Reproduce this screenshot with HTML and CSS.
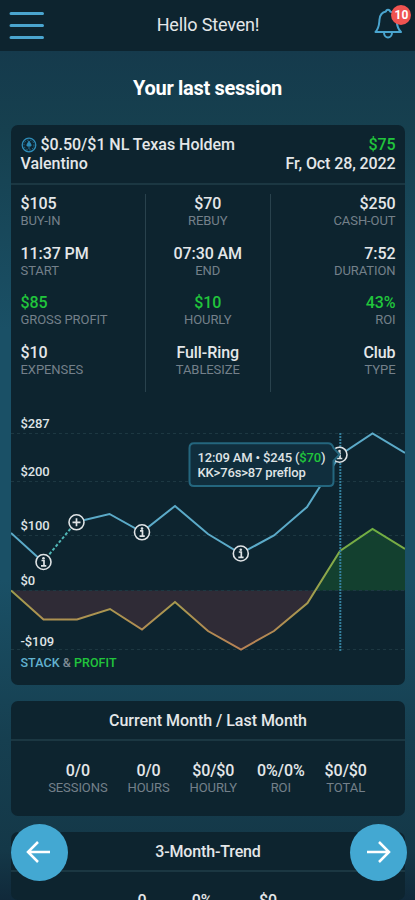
FILE: index.html
```html
<!DOCTYPE html>
<html lang="en">
<head>
<meta charset="utf-8">
<title>Session overview</title>
<link rel="stylesheet" href="styles.css">
</head>
<body>
<header class="topbar">
  <svg class="menu" viewBox="0 0 36 30"><path d="M3 2.500H34.500M3 14.500H34.500M3 26.500H34.500"/></svg>
  <div class="hello">Hello Steven!</div>
  <div class="bell">
    <svg viewBox="0 0 30 32"><path d="M1.500 25C5.500 20.500 5 17 5.500 12.500C6 7.500 9 5 12 4.500C12.300 2 15.700 2 16 4.500C19 5 22 7.500 22.500 12.500C23 17 22.500 20.500 27 25ZM10 25.500C10 32 18 32 18 25.500"/></svg>
    <span class="badge">10</span>
  </div>
</header>
<h1 class="title">Your last session</h1>
<main class="cards">
  <section class="card session">
    <div class="head">
      <div><svg class="coin" viewBox="0 0 16 16"><circle cx="8" cy="8" r="6.800"/><circle class="dash" cx="8" cy="8" r="5"/><path d="M8 4L6 7.500C5.300 9 6.800 9.800 8 8.800C9.200 9.800 10.700 9 10 7.500ZM8 8V12"/></svg>$0.50/$1 NL Texas Holdem<br>Valentino</div>
      <div class="right"><span class="green">$75</span><br>Fr, Oct 28, 2022</div>
    </div>
    <div class="facts">
      <div class="col">
        <div class="fact"><b>$105</b><span>BUY-IN</span></div>
        <div class="fact"><b>11:37 PM</b><span>START</span></div>
        <div class="fact"><b class="green">$85</b><span>GROSS PROFIT</span></div>
        <div class="fact"><b>$10</b><span>EXPENSES</span></div>
      </div>
      <div class="col mid">
        <div class="fact"><b>$70</b><span>REBUY</span></div>
        <div class="fact"><b>07:30 AM</b><span>END</span></div>
        <div class="fact"><b class="green">$10</b><span>HOURLY</span></div>
        <div class="fact"><b>Full-Ring</b><span>TABLESIZE</span></div>
      </div>
      <div class="col last">
        <div class="fact"><b>$250</b><span>CASH-OUT</span></div>
        <div class="fact"><b>7:52</b><span>DURATION</span></div>
        <div class="fact"><b class="green">43%</b><span>ROI</span></div>
        <div class="fact"><b>Club</b><span>TYPE</span></div>
      </div>
    </div>
    <svg class="chart" viewBox="11 400 394 285">
      <defs>
        <linearGradient id="profit" gradientUnits="userSpaceOnUse" x1="0" y1="529" x2="0" y2="650">
          <stop offset="0" stop-color="#6fae42"/><stop offset=".35" stop-color="#8aa84a"/><stop offset=".6" stop-color="#a79a4f"/><stop offset="1" stop-color="#b88155"/>
        </linearGradient>
        <g id="info"><circle r="7.500" class="ring"/><path class="glyph" d="M-2-1.500H.5V3.500M-2.500 3.800H2.800"/><circle class="dot" cx="0" cy="-3.700" r="1.300"/></g>
      </defs>
      <path class="loss" d="M11 590.500L43.500 619.500H77L110 609L142 629.500L175 602L208 631L241 649.500L274 631L307.500 603L315.500 590.500Z"/>
      <path class="gain" d="M315.500 590.500L340 551L372.500 529L405 549V590.500Z"/>
      <path class="grid" d="M11 433.500H405M11 481.500H405M11 535.500H405M11 590.500H405M11 649.500H405"/>
      <path class="profit" d="M11 590.500L43.500 619.500H77L110 609L142 629.500L175 602L208 631L241 649.500L274 631L307.500 603L340 551L372.500 529L405 549"/>
      <path class="cursor" d="M340.300 433V651"/>
      <path class="stack" d="M11 533L43 562M76 522L109.500 514L142 532L175 506L208 534L240.500 553.500L274 535.500L307 507L340 455L372.500 433.500L405 453"/>
      <path class="stack dotted" d="M43 562L76 522"/>
      <use href="#info" x="43.500" y="562"/>
      <g transform="translate(76.500 522.300)"><circle r="7.500" class="ring"/><path class="glyph" d="M-4 0H4M0-4V4"/></g>
      <use href="#info" x="142" y="532.300"/>
      <use href="#info" x="240.800" y="553.500"/>
      <use href="#info" x="339.500" y="454.700"/>
      <path class="tip" d="M194 443.300H328Q332 443.300 333.500 448L339.500 454.500L333.500 461V481.500Q333.500 486 329 486H194Q189.500 486 189.500 481.500V448Q189.500 443.300 194 443.300Z"/>
      <text class="tiptext" x="197.500" y="462">12:09 AM • $245 (<tspan class="tgreen">$70</tspan>)</text>
      <text class="tiptext" x="197.500" y="477">KK&gt;76s&gt;87 preflop</text>
      <g class="axis"><text x="20.500" y="428">$287</text><text x="20.500" y="476">$200</text><text x="20.500" y="530">$100</text><text x="20.500" y="585">$0</text><text x="20.500" y="645.500">-$109</text></g>
      <text class="legend" x="20.500" y="667"><tspan class="tblue">STACK</tspan> &amp; <tspan class="tgreen">PROFIT</tspan></text>
    </svg>
  </section>
  <section class="card month">
    <h2>Current Month / Last Month</h2>
    <div class="stats">
      <div class="fact"><b>0/0</b><span>SESSIONS</span></div>
      <div class="fact"><b>0/0</b><span>HOURS</span></div>
      <div class="fact"><b>$0/$0</b><span>HOURLY</span></div>
      <div class="fact"><b>0%/0%</b><span>ROI</span></div>
      <div class="fact"><b>$0/$0</b><span>TOTAL</span></div>
    </div>
  </section>
  <section class="card trend">
    <h2>3-Month-Trend</h2>
    <div class="stats">
      <div class="fact"><b>0</b></div>
      <div class="fact"><b>0%</b></div>
      <div class="fact"><b>$0</b></div>
    </div>
  </section>
</main>
<div class="round prev"><svg viewBox="0 0 24 24"><path d="M23 12H1M11 2L1 12L11 22"/></svg></div>
<div class="round next"><svg viewBox="0 0 24 24"><path d="M1 12H23M13 2L23 12L13 22"/></svg></div>
</body>
</html>
```
FILE: styles.css
```css
* { box-sizing: border-box; }
body {
  margin: 0;
  height: 900px;
  overflow: hidden;
  position: relative;
  font-family: Roboto, "Liberation Sans", sans-serif;
  color: #e4e7e9;
  background: linear-gradient(180deg, #153a4c 50px, #16404f 130px, #1a5066 330px, #1a5066 580px, #163f50 740px, #143848 850px, #10293a 900px);
}
.topbar {
  height: 51px;
  background: #0d242f;
  display: flex;
  justify-content: space-between;
  padding: 0 8px;
}
.menu { width: 36px; height: 30px; margin-top: 11px; }
.menu path { stroke: #4aa5cf; stroke-width: 3; stroke-linecap: round; }
.hello { font-size: 18px; line-height: 50px; letter-spacing: -.15px; padding-left: 1px; }
.bell { position: relative; width: 36px; padding: 7px 0 0 3px; }
.bell svg { width: 30px; height: 32px; display: block; fill: none; stroke: #4aa5cf; stroke-width: 2; stroke-linejoin: round; }
.badge {
  position: absolute; right: 3.5px; top: 5px;
  width: 20px; height: 20px; margin-right: -8px;
  border-radius: 50%; background: #ef5350; color: #fff;
  font-size: 12px; font-weight: 700; line-height: 20px; text-align: center;
}
.title { margin: 0; height: 74px; line-height: 74px; font-size: 20px; font-weight: 700; text-align: center; letter-spacing: -.3px; color: #fff; }
.cards { display: flex; flex-direction: column; gap: 15.5px; padding: 0 10px 0 11px; }
.card { background: #0d242f; border-radius: 7px; overflow: hidden; flex: none; }
.session { height: 560px; }
.head {
  height: 60px; padding: 10px 9.5px 0;
  display: flex; justify-content: space-between;
  font-size: 16px; line-height: 19px; font-weight: 500; letter-spacing: -.04px;
  border-bottom: 2px solid #1b3742;
}
.right { text-align: right; letter-spacing: -.1px; }
.coin { width: 16px; height: 16px; vertical-align: -2.5px; margin-right: 4px; fill: none; stroke: #2f8cb8; stroke-width: 1.3; }
.coin .dash { stroke-width: .7; stroke-dasharray: 1.5 1.5; }
.coin path { fill: #2f8cb8; stroke-width: .8; }
.green { color: #21c53c; }
.facts { height: 215px; padding: 9px 9.5px 8px; display: flex; }
.col { height: 198px; flex: 0 0 125.5px; }
.col:first-child { flex-basis: 124.5px; }
.col.last { flex-basis: 125px; }
.col.mid { text-align: center; border-left: 1px solid #29424d; border-right: 1px solid #29424d; }
.col.last { text-align: right; }
.fact { display: flex; flex-direction: column; }
.fact b { font-size: 16px; line-height: 21px; font-weight: 500; letter-spacing: -.08px; }
.fact span { font-size: 13px; line-height: 14px; color: #74808a; letter-spacing: -.08px; }
.col .fact { height: 49.5px; }
.col .fact b { line-height: 20px; }
.chart { display: block; width: 394px; height: 285px; }
.loss { fill: #2f2b36; }
.gain { fill: #13402f; }
.grid { stroke: #1d3842; stroke-width: 1; stroke-dasharray: 3 3; }
.profit { fill: none; stroke: url(#profit); stroke-width: 2; }
.stack { fill: none; stroke: #5baac8; stroke-width: 2; }
.dotted { stroke: #4fb5b5; stroke-dasharray: 3 2; }
.cursor { stroke: #337f9c; stroke-width: 2; stroke-dasharray: 2 1; }
.ring { fill: #0d242f; stroke: #dfe3e5; stroke-width: 1.6; }
.glyph { fill: none; stroke: #dfe3e5; stroke-width: 1.7; }
.dot { fill: #dfe3e5; }
.tip { fill: #102e3d; stroke: #24667e; stroke-width: 2; }
.tiptext { font-size: 13px; font-weight: 500; fill: #dfe3e5; letter-spacing: -.16px; }
.axis { font-size: 13px; font-weight: 500; fill: #dfe3e5; letter-spacing: -.1px; }
.legend { font-size: 12.5px; font-weight: 500; fill: #7e8b94; letter-spacing: .05px; }
.tgreen { fill: #21c53c; }
.tblue { fill: #62b2cf; }
.card h2 { margin: 0; height: 40px; border-bottom: 2px solid #1b3742; font-size: 16px; line-height: 39px; font-weight: 500; text-align: center; letter-spacing: -.03px; }
.month { height: 115.5px; }
.stats { display: flex; justify-content: center; gap: 20px; padding-top: 19.5px; text-align: center; }
.month .stats { padding-right: 1px; }
.trend { height: 68px; }
.trend h2 { line-height: 39px; letter-spacing: -.15px; }
.trend .stats { display: grid; grid-template-columns: 58px 62px 70px; gap: 0; justify-content: start; padding-top: 18.5px; padding-left: 102px; }
.round {
  position: absolute; top: 824px; width: 57px; height: 57px;
  border-radius: 50%; background: #43a8d2;
  display: grid; place-items: center;
}
.prev { left: 10.5px; }
.next { left: 349.5px; }
.round svg { width: 24px; height: 24px; margin-right: 1px; margin-bottom: 1px; fill: none; stroke: #fff; stroke-width: 2.5; overflow: visible; }
```
